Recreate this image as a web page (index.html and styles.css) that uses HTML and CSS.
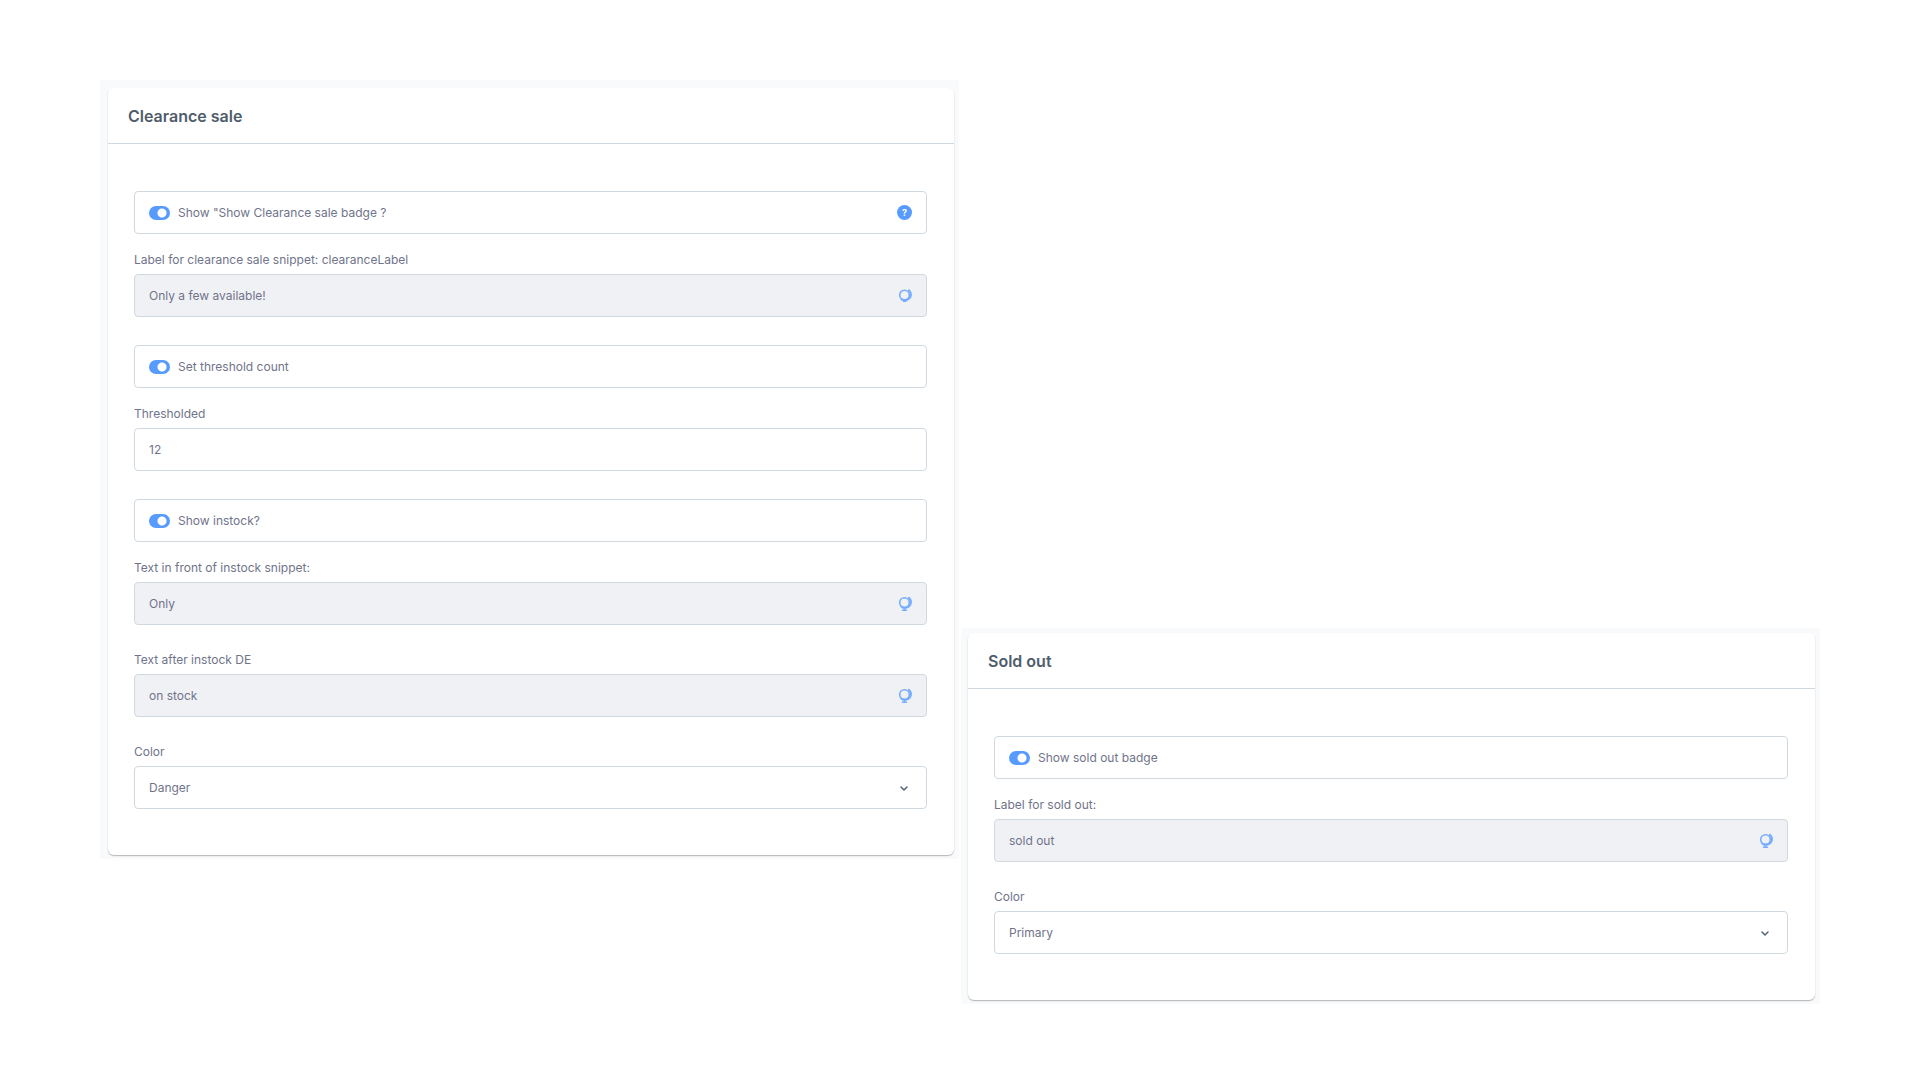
FILE: index.html
```html
<!DOCTYPE html>
<html lang="en">
<head>
<meta charset="utf-8">
<title>Badge settings</title>
<link rel="stylesheet" href="styles.css">
</head>
<body>
<svg class="sprite" aria-hidden="true">
  <symbol id="globe" viewBox="0 0 16 16">
    <circle cx="7.500" cy="6.500" r="4.800" fill="none" stroke="currentColor" stroke-width="1.600"/>
    <path d="M12 1.800c3 3 2.500 7.200-.8 9.200-2.200 1.300-5 1-6.700-.3" fill="none" stroke="currentColor" stroke-width="2" stroke-linecap="round"/>
    <path d="M7.500 12v2M5.500 14.300h4" fill="none" stroke="currentColor" stroke-width="1.600" stroke-linecap="round"/>
  </symbol>
  <symbol id="globe-head" viewBox="0 0 16 16">
    <circle cx="7.500" cy="7" r="4.800" fill="none" stroke="currentColor" stroke-width="1.600"/>
    <path d="M12 2.300c3 3 2.500 7.200-.8 9.200-2.200 1.300-5 1-6.700-.3" fill="none" stroke="currentColor" stroke-width="2" stroke-linecap="round"/>
    <path d="M6.500 13.300h2.500" fill="none" stroke="currentColor" stroke-width="1.200" stroke-linecap="round"/>
  </symbol>
  <symbol id="chevron" viewBox="0 0 8 8">
    <path d="M1 3l3 3 3-3" fill="none" stroke="currentColor" stroke-width="1.500" stroke-linecap="round" stroke-linejoin="round"/>
  </symbol>
</svg>
<main class="page">
  <section class="panel">
    <form class="card">
      <h2 class="card-title">Clearance sale</h2>
      <div class="card-body">
        <div class="box switch-row">
          <input class="switch" type="checkbox" id="show-clearance" checked>
          <label class="switch-label" for="show-clearance">Show "Show Clearance sale badge ?</label>
          <button class="help" type="button" aria-label="Help">?</button>
        </div>
        <div class="field">
          <label class="label" for="clearance-label">Label for clearance sale snippet: clearanceLabel</label>
          <div class="box filled">
            <input class="control" type="text" id="clearance-label" value="Only a few available!">
            <svg class="globe"><use href="#globe-head"/></svg>
          </div>
        </div>
        <div class="box switch-row">
          <input class="switch" type="checkbox" id="set-threshold" checked>
          <label class="switch-label" for="set-threshold">Set threshold count</label>
        </div>
        <div class="field">
          <label class="label" for="threshold">Thresholded</label>
          <div class="box">
            <input class="control" type="text" id="threshold" value="12">
          </div>
        </div>
        <div class="box switch-row">
          <input class="switch" type="checkbox" id="show-instock" checked>
          <label class="switch-label" for="show-instock">Show instock?</label>
        </div>
        <div class="field">
          <label class="label" for="text-before">Text in front of instock snippet:</label>
          <div class="box filled">
            <input class="control" type="text" id="text-before" value="Only">
            <svg class="globe"><use href="#globe"/></svg>
          </div>
        </div>
        <div class="field">
          <label class="label" for="text-after">Text after instock DE</label>
          <div class="box filled">
            <input class="control" type="text" id="text-after" value="on stock">
            <svg class="globe"><use href="#globe"/></svg>
          </div>
        </div>
        <div class="field">
          <label class="label" for="clearance-color">Color</label>
          <div class="box select-box">
            <select class="control" id="clearance-color"><option>Danger</option></select>
            <svg class="chevron"><use href="#chevron"/></svg>
          </div>
        </div>
      </div>
    </form>
  </section>
  <section class="panel panel-late">
    <form class="card">
      <h2 class="card-title">Sold out</h2>
      <div class="card-body">
        <div class="box switch-row">
          <input class="switch" type="checkbox" id="show-soldout" checked>
          <label class="switch-label" for="show-soldout">Show sold out badge</label>
        </div>
        <div class="field">
          <label class="label" for="soldout-label">Label for sold out:</label>
          <div class="box filled">
            <input class="control" type="text" id="soldout-label" value="sold out">
            <svg class="globe"><use href="#globe"/></svg>
          </div>
        </div>
        <div class="field">
          <label class="label" for="soldout-color">Color</label>
          <div class="box select-box">
            <select class="control" id="soldout-color"><option>Primary</option></select>
            <svg class="chevron"><use href="#chevron"/></svg>
          </div>
        </div>
      </div>
    </form>
  </section>
</main>
</body>
</html>
```
FILE: styles.css
```css
* {
  box-sizing: border-box;
}

body {
  margin: 0;
  background: #fff;
  color: #70748a;
  font-family: Inter, "Liberation Sans", sans-serif;
  font-size: 12px;
  line-height: 16px;
}

.sprite {
  display: none;
}

.page {
  display: grid;
  grid-template-columns: 1fr 1fr;
  gap: 2px;
  align-items: start;
  padding: 80px 100px 76px;
}

.panel {
  padding: 8px 5px 4px 8px;
  background: #f9fafb;
}

.panel-late {
  margin-top: 548px;
  padding: 5px 5px 4px 7px;
}

.card {
  background: #fff;
  border-radius: 6px;
  box-shadow: 0 1px 1px rgba(0, 0, 0, 0.2), 0 1px 2px rgba(0, 0, 0, 0.1);
}

.card-title {
  height: 56px;
  margin: 0;
  padding: 18px 20px;
  border-bottom: 1px solid #d1d9e0;
  color: #4f5d6b;
  font-size: 16px;
  font-weight: 600;
  line-height: 20px;
}

.card-body {
  padding: 47px 27px 46px 26px;
}

.box {
  display: flex;
  align-items: center;
  height: 43px;
  padding: 0 13px 0 14px;
  border: 1px solid #d1d9e0;
  border-radius: 4px;
  background: #fff;
}

.filled {
  background: #f0f1f5;
}

.switch-row {
  margin-bottom: 19px;
}

.field {
  margin-bottom: 28px;
}

.field:last-child {
  margin-bottom: 0;
}

.label {
  display: block;
  height: 21px;
  line-height: 14px;
}

.switch {
  appearance: none;
  width: 21px;
  height: 14px;
  margin: 0 8px 0 0;
  border-radius: 7px;
  background: radial-gradient(circle at 13px 7px, #fff 4px, #589bff 5px);
}

.switch-label {
  flex: 1;
}

.help {
  width: 15px;
  height: 15px;
  margin-right: 1px;
  padding: 0;
  border: 0;
  border-radius: 50%;
  background: #589bff;
  color: #fff;
  font: 700 9px/15px Inter, sans-serif;
}

.control {
  flex: 1;
  min-width: 0;
  height: 20px;
  padding: 0;
  border: 0;
  outline: 0;
  appearance: none;
  background: transparent;
  color: inherit;
  font: inherit;
}

.globe {
  width: 16px;
  height: 16px;
  color: #76adfd;
}

.select-box {
  padding-right: 18px;
}

.chevron {
  width: 8px;
  height: 8px;
  color: #52667a;
}
```
